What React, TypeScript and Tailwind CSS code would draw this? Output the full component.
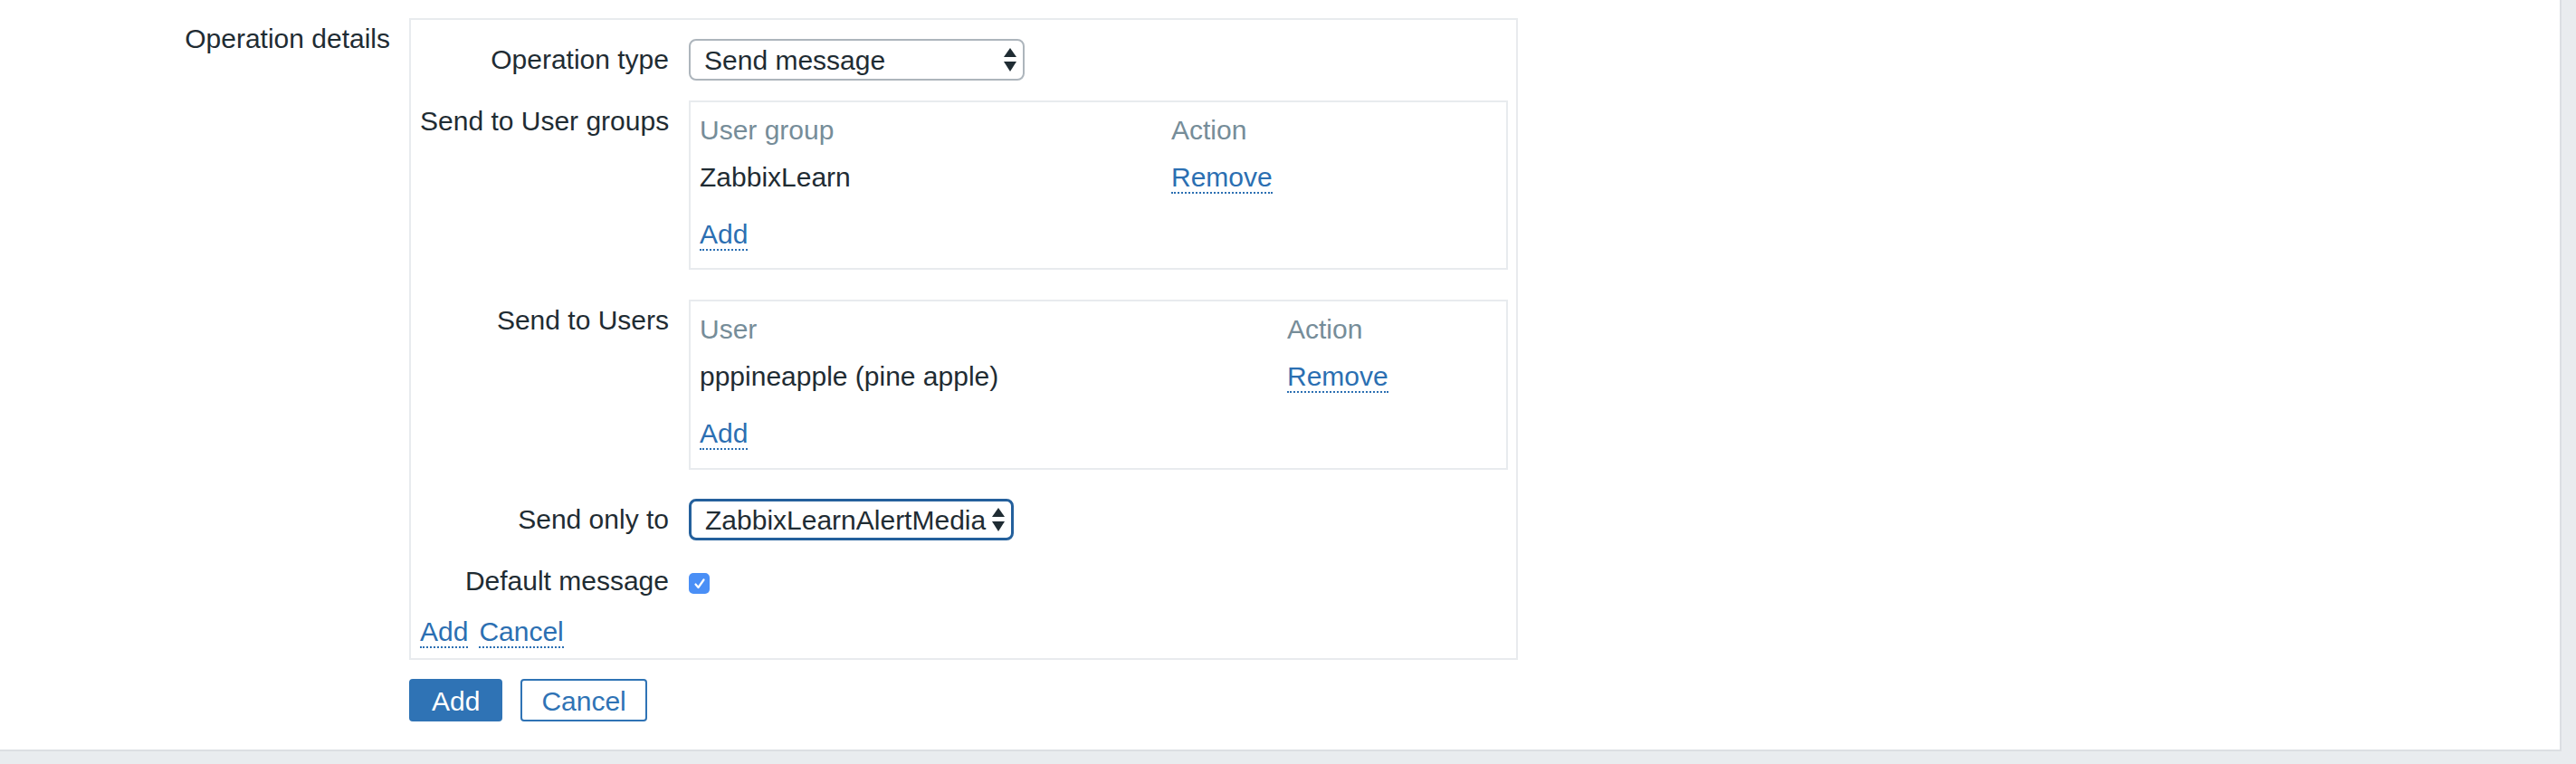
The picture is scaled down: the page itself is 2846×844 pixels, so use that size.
const linkClass =
  "cursor-pointer border-b-2 border-dotted border-[#2b6fb2] text-[#2b6fb2]";

function SelectArrows() {
  return (
    <svg className="h-[26px] w-[14px] shrink-0" viewBox="0 0 14 26">
      <path d="M7 0 L14 10 L0 10 Z" fill="#1f2c33" />
      <path d="M0 15 L14 15 L7 26 Z" fill="#1f2c33" />
    </svg>
  );
}

type FakeSelectProps = {
  value: string;
  width: string;
  focused?: boolean;
};

function FakeSelect({ value, width, focused }: FakeSelectProps) {
  const border = focused
    ? "border-[#24609c] border-[3px]"
    : "border-[#adb5bc] border-2";
  return (
    <div
      className={`flex h-[46px] items-center justify-between rounded-[8px] bg-white pl-[15px] pr-[7px] ${border} ${width}`}
    >
      <span className="whitespace-nowrap">{value}</span>
      <SelectArrows />
    </div>
  );
}

type ListBoxProps = {
  header: string;
  colWidth: string;
  item: string;
  height: string;
};

function ListBox({ header, colWidth, item, height }: ListBoxProps) {
  return (
    <div
      className={`w-[905px] border-2 border-[#e8ebee] pt-[5px] ${height}`}
    >
      <div className={`grid ${colWidth}`}>
        <div className="h-[52px] pl-[10px] leading-[52px] text-[#768d99]">
          {header}
        </div>
        <div className="h-[52px] pl-[10px] leading-[52px] text-[#768d99]">
          Action
        </div>
        <div className="h-[52px] pl-[10px] leading-[52px]">{item}</div>
        <div className="h-[52px] pl-[10px] leading-[52px]">
          <span className={linkClass}>Remove</span>
        </div>
      </div>
      <div className="mt-[11px] h-[52px] pl-[10px] leading-[52px]">
        <span className={linkClass}>Add</span>
      </div>
    </div>
  );
}

type RowProps = {
  label: string;
  className?: string;
  children: React.ReactNode;
};

function FormRow({ label, className, children }: RowProps) {
  return (
    <div className={`flex items-start gap-[22px] ${className ?? ""}`}>
      <div className="w-[275px] shrink-0 text-right leading-[46px] whitespace-nowrap">
        {label}
      </div>
      {children}
    </div>
  );
}

export default function App() {
  return (
    <div className="h-[844px] w-[2846px] bg-[#e9ecef] font-['Liberation_Sans',Arial,sans-serif] text-[30px] text-[#1f2c33]">
      <div className="h-[830px] w-[2830px] border-b-2 border-r-2 border-[#dcdfe3] bg-white pt-[20px]">
        <div className="flex items-start">
          <div className="w-[431px] shrink-0 text-right leading-[46px]">
            Operation details
          </div>
          <div className="ml-[21px] flex flex-col">
            <div className="w-[1225px] border-2 border-[#e8ebee] pb-[6px] pl-[10px] pr-[9px] pt-[21px]">
              <FormRow className="mb-[22px]" label="Operation type">
                <FakeSelect value="Send message" width="w-[371px]" />
              </FormRow>
              <FormRow className="mb-[33px]" label="Send to User groups">
                <ListBox
                  colWidth="grid-cols-[521px_1fr]"
                  header="User group"
                  height="h-[187px]"
                  item="ZabbixLearn"
                />
              </FormRow>
              <FormRow className="mb-[32px]" label="Send to Users">
                <ListBox
                  colWidth="grid-cols-[649px_1fr]"
                  header="User"
                  height="h-[188px]"
                  item="pppineapple (pine apple)"
                />
              </FormRow>
              <FormRow className="mb-[22px]" label="Send only to">
                <FakeSelect
                  focused
                  value="ZabbixLearnAlertMedia"
                  width="w-[359px]"
                />
              </FormRow>
              <FormRow label="Default message">
                <div className="mt-[14px] flex h-[23px] w-[23px] items-center justify-center rounded-[5px] bg-[#4a8ff6]">
                  <svg className="h-[14px] w-[14px]" viewBox="0 0 14 14">
                    <path
                      d="M2.5 7.5 L5.5 11 L11.5 2.5"
                      fill="none"
                      stroke="white"
                      strokeLinecap="round"
                      strokeLinejoin="round"
                      strokeWidth="2.2"
                    />
                  </svg>
                </div>
              </FormRow>
              <div className="mt-[10px] flex h-[46px] gap-[12px] leading-[46px]">
                <span>
                  <span className={linkClass}>Add</span>
                </span>
                <span>
                  <span className={linkClass}>Cancel</span>
                </span>
              </div>
            </div>
            <div className="mt-[21px] flex gap-[20px]">
              <button
                className="h-[47px] rounded-[4px] border-2 border-[#2f73b5] bg-[#2f73b5] px-[23px] text-white"
                type="button"
              >
                Add
              </button>
              <button
                className="h-[47px] rounded-[4px] border-2 border-[#2f73b5] bg-white px-[21px] text-[#2f73b5]"
                type="button"
              >
                Cancel
              </button>
            </div>
          </div>
        </div>
      </div>
    </div>
  );
}
